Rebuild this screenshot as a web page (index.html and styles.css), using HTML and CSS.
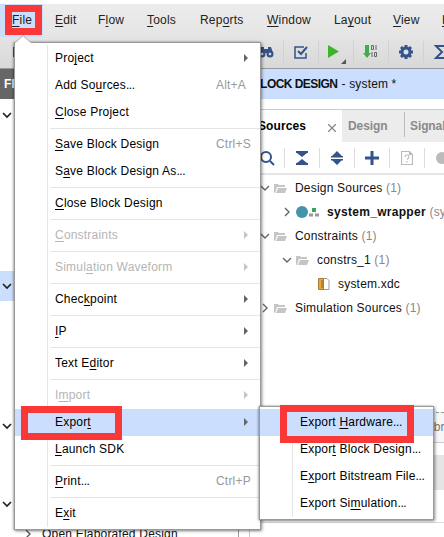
FILE: index.html
```html
<!DOCTYPE html>
<html lang="en">
<head>
<meta charset="utf-8">
<title>Block Design</title>
<link rel="stylesheet" href="styles.css">
</head>
<body>
<div class="app">
  <nav class="menubar">
    <span class="mb active"><u>F</u>ile</span><span class="mb"><u>E</u>dit</span><span class="mb">F<u>l</u>ow</span><span class="mb"><u>T</u>ools</span><span class="mb">Rep<u>o</u>rts</span><span class="mb"><u>W</u>indow</span><span class="mb">La<u>y</u>out</span><span class="mb"><u>V</u>iew</span><span class="mb"><u>H</u>elp</span>
  </nav>
  <div class="toolbar">
    <span class="tool first"><i class="save"></i></span>
    <span class="tool"><svg width="16" height="16" viewBox="0 0 16 16" fill="#34538b"><path d="M3 3h3v2h4V3h3l2 6H1z"/><circle cx="4" cy="10" r="3.5"/><circle cx="12" cy="10" r="3.5"/><circle cx="4" cy="10" r="1.3" fill="#dedede"/><circle cx="12" cy="10" r="1.3" fill="#dedede"/></svg></span>
    <span class="tool"><svg width="16" height="16" viewBox="0 0 16 16" fill="none" stroke="#34538b"><path d="M11 3H2v11h11V9" stroke-width="1.5"/><path d="M5 7l3 3 6-7" stroke-width="2"/></svg></span>
    <span class="tool"><svg width="20" height="24" viewBox="0 0 20 24"><path d="M2 5l11 6.500L2 18z" fill="#3eb527"/><path d="M20 19v5h-5z" fill="#555"/></svg></span>
    <span class="tool"><svg width="16" height="16" viewBox="0 0 16 16"><path d="M2 1h4v8h2l-4 5-4-5h2z" fill="#3fae49"/><path d="M8.500 1.500h2v4h-2zM13 1v5M9 8v5M11.500 8.500h2v4h-2z" fill="none" stroke="#666"/></svg></span>
    <span class="tool"><svg width="16" height="16" viewBox="0 0 16 16" fill="none" stroke="#34538b"><circle cx="8" cy="8" r="4" stroke-width="3"/><path d="M8 1v2M8 13v2M1 8h2M13 8h2M3 3l2 2M11 11l2 2M13 3l-2 2M3 13l2-2" stroke-width="3"/></svg></span>
    <span class="tool"><svg width="16" height="16" viewBox="0 0 16 16" fill="none" stroke="#34538b" stroke-width="2"><path d="M14 5V2H3l6 6-6 6h11v-3"/></svg></span>
  </div>
  <div class="workspace">
    <aside class="navigator">
      <div class="nav-title">Flow Navigator</div>
      <div class="nav-row r1"><svg class="chev" viewBox="0 0 10 8"><path d="M1 2l4 4 4-4"/></svg></div>
      <div class="nav-row r2"><svg class="chev" viewBox="0 0 10 8"><path d="M1 2l4 4 4-4"/></svg></div>
      <div class="nav-row r3"><svg class="chev" viewBox="0 0 10 8"><path d="M1 2l4 4 4-4"/></svg></div>
      <div class="nav-row r4"><svg class="chev" viewBox="0 0 10 8"><path d="M1 2l4 4 4-4"/></svg></div>
      <div class="nav-row r5"><svg width="8" height="10" viewBox="0 0 8 10" fill="none" stroke="#555" stroke-width="1.3"><path d="M2 1l4 4-4 4"/></svg><span>Open Elaborated Design</span></div>
    </aside>
    <main class="design">
      <header class="banner"><b>BLOCK DESIGN</b> - system *</header>
      <div class="tabs"><b class="tab current">Sources<svg width="8" height="8" viewBox="0 0 8 8" stroke="#888" stroke-width="1.3"><path d="M0 0l8 8M8 0L0 8"/></svg></b><b class="tab">Design</b><b class="tab signals">Signals</b></div>
      <div class="panel-tools">
        <span><svg width="16" height="16" viewBox="0 0 16 16" fill="none" stroke="#34538b" stroke-width="2"><circle cx="7" cy="7" r="5"/><path d="M11 11l4 4"/></svg></span>
        <span><svg width="12" height="16" viewBox="0 0 12 16" fill="#34538b"><path d="M0 1h12v2H0zM1 3h10L6 7zM6 9l5 4H1zM0 13h12v2H0z"/></svg></span>
        <span><svg width="12" height="16" viewBox="0 0 12 16" fill="#34538b"><path d="M6 1l5 5H1zM0 6h12v1.500H0zM0 9h12v1.500H0zM1 10h10l-5 5z"/></svg></span>
        <span><svg width="14" height="14" viewBox="0 0 14 14" fill="#34538b"><path d="M5.500 0h3v5.500H14v3H8.500V14h-3V8.500H0v-3h5.500z"/></svg></span>
        <span><svg width="12" height="14" viewBox="0 0 12 14" fill="none" stroke="#bbb"><path d="M.5.500h8l3 3v10H.5zM8.500.500v3h3M4 6q0-2 2-2t2 1.500-2 3M6 10v1.500" stroke-width="1.200"/></svg></span>
        <span><svg width="16" height="16" viewBox="0 0 16 16"><circle cx="8" cy="8" r="6" fill="#bbb"/></svg></span>
      </div>
      <div class="tree">
        <div class="node"><svg class="tw" viewBox="0 0 10 10"><path d="M1 3l4 4 4-4"/></svg><svg class="folder" viewBox="0 0 13 11"><path d="M0 1h4l1 1h6v2H3L1 10H0z"/><path d="M4 5h9l-2 5H2z"/></svg><span>Design Sources <em>(1)</em></span></div>
        <div class="node l1"><svg class="tw" viewBox="0 0 10 10"><path d="M3 1l4 4-4 4"/></svg><svg class="module" width="24" height="12" viewBox="0 0 24 12"><circle cx="6" cy="6" r="6" fill="#4594aa"/><path d="M16 2h4v4h-4z" fill="#34a853"/><path d="M13 7.500h4v3h-4zM19 7.500h4v3h-4z" fill="#999"/></svg><span><b>system_wrapper</b> <em>(system_wrapper.v)</em></span></div>
        <div class="node"><svg class="tw" viewBox="0 0 10 10"><path d="M1 3l4 4 4-4"/></svg><svg class="folder" viewBox="0 0 13 11"><path d="M0 1h4l1 1h6v2H3L1 10H0z"/><path d="M4 5h9l-2 5H2z"/></svg><span>Constraints <em>(1)</em></span></div>
        <div class="node l1"><svg class="tw" viewBox="0 0 10 10"><path d="M1 3l4 4 4-4"/></svg><svg class="folder" viewBox="0 0 13 11"><path d="M0 1h4l1 1h6v2H3L1 10H0z"/><path d="M4 5h9l-2 5H2z"/></svg><span>constrs_1 <em>(1)</em></span></div>
        <div class="node l2"><svg class="xdc" width="12" height="12" viewBox="0 0 12 12"><path d="M5 .5h4l2 2v9H5" fill="#fff" stroke="#999"/><path d="M.5.500h5v11h-5z" fill="#eda63c" stroke="#a87a3b"/><path d="M3 3h2M3 5h2M3 7h2M3 9h2" stroke="#8a6025"/></svg><span>system.xdc</span></div>
        <div class="node"><svg class="tw" viewBox="0 0 10 10"><path d="M3 1l4 4-4 4"/></svg><svg class="folder" viewBox="0 0 13 11"><path d="M0 1h4l1 1h6v2H3L1 10H0z"/><path d="M4 5h9l-2 5H2z"/></svg><span>Simulation Sources <em>(1)</em></span></div>
      </div>
      <div class="subtabs">Libraries</div>
      <div class="props"></div>
    </main>
  </div>
</div>

<div class="menu file-menu">
  <svg class="pointer" width="16" height="8" viewBox="0 0 16 8"><path d="M0 8l8-7.500L16 8z" fill="#fff"/><path d="M1 7L8 .5 15 7" fill="none" stroke="#aaa"/></svg>
  <div class="item sub"><span>Pro<u>j</u>ect</span></div>
  <div class="item"><span>Add So<u>u</u>rces<i>...</i></span><kbd>Alt+A</kbd></div>
  <div class="item"><span><u>C</u>lose Project</span></div>
  <hr>
  <div class="item"><span><u>S</u>ave Block Design</span><kbd>Ctrl+S</kbd></div>
  <div class="item"><span>S<u>a</u>ve Block Design As<i>...</i></span></div>
  <hr>
  <div class="item"><span><u>C</u>lose Block Design</span></div>
  <hr>
  <div class="item sub off"><span><u>C</u>onstraints</span></div>
  <hr>
  <div class="item sub off"><span>Simul<u>a</u>tion Waveform</span></div>
  <hr>
  <div class="item sub"><span>Chec<u>k</u>point</span></div>
  <hr>
  <div class="item sub"><span><u>I</u>P</span></div>
  <hr>
  <div class="item sub"><span>Text E<u>d</u>itor</span></div>
  <hr>
  <div class="item sub off"><span>I<u>m</u>port</span></div>
  <div class="item sub hot"><span>Expor<u>t</u></span></div>
  <div class="item"><span><u>L</u>aunch SDK</span></div>
  <hr>
  <div class="item"><span><u>P</u>rint<i>...</i></span><kbd>Ctrl+P</kbd></div>
  <hr>
  <div class="item"><span>E<u>x</u>it</span></div>
</div>
<div class="menu export-menu">
  <div class="item hot"><span>Export <u>H</u>ardware<i>...</i></span></div>
  <div class="item"><span>Expor<u>t</u> Block Design<i>...</i></span></div>
  <div class="item"><span>E<u>x</u>port Bitstream File<i>...</i></span></div>
  <div class="item"><span>Export Si<u>m</u>ulation<i>...</i></span></div>
</div>
<div class="mark mark-file"></div>
<div class="mark mark-export"></div>
<div class="mark mark-hardware"></div>
</body>
</html>
```
FILE: styles.css
```css
* { box-sizing: border-box; }
body { margin: 0; width: 444px; height: 537px; overflow: hidden; position: relative; background: #fff; font: 12px/14px "Liberation Sans", Arial, sans-serif; letter-spacing: .2px; color: #111; }
u { text-underline-offset: 2px; text-decoration-thickness: 1px; text-decoration-skip-ink: none; }
svg { flex: none; display: block; }
.app { width: 444px; height: 537px; padding-top: 4px; overflow: hidden; display: flex; flex-direction: column; }
.menubar { height: 33px; flex: none; display: flex; background: linear-gradient(#ececec, #e5e5e5); color: #222; white-space: nowrap; }
.mb { flex: none; padding-top: 9px; width: 49px; }
.mb:nth-child(1) { width: 43px; padding-left: 12px; margin-right: 12px; }
.mb:nth-child(2) { width: 43px; }
.mb:nth-child(5) { width: 67px; }
.mb:nth-child(6) { width: 67px; }
.mb:nth-child(7) { width: 59px; }
.mb:nth-child(4) { width: 53px; }
.mb.active { background: #cbdefe; }
.toolbar { height: 32px; flex: none; display: flex; background: linear-gradient(#e4e4e4, #d8d8d8); border-bottom: 1px solid #999; padding-top: 4px; }
.tool { width: 35px; height: 22px; flex: none; display: flex; align-items: center; justify-content: center; border-right: 1px solid #d1d1d1; }
.tool.first { width: 249px; justify-content: flex-start; padding-left: 13px; }
.save { width: 10px; height: 10px; background: #34538b; }
.workspace { flex: 1; display: flex; min-height: 0; }
.navigator { width: 239px; flex: none; border-right: 1px solid #999; display: flex; flex-direction: column; overflow: hidden; }
.nav-title { height: 30px; flex: none; background: #666; color: #fff; font-weight: bold; padding: 8px 4px; }
.nav-row { display: flex; height: 30px; flex: none; align-items: center; padding-left: 2px; }
.chev { width: 10px; height: 8px; fill: none; stroke: #222; stroke-width: 1.7; }
.r1 { margin-top: 1px; }
.r2 { margin-top: 141px; background: #cbdefe; }
.r3 { margin-top: 110px; }
.r4 { margin-top: 48px; }
.r5 { padding-left: 24px; gap: 10px; white-space: nowrap; }
.design { width: 195px; flex: none; margin-left: 10px; border-left: 1px solid #ccc; display: flex; flex-direction: column; }
.banner { height: 30px; flex: none; background: #cbdefe; padding: 8px 2px; white-space: nowrap; letter-spacing: .15px; }
.banner b { letter-spacing: -.55px; margin-right: .7px; }
.tabs { display: flex; flex: none; height: 33px; margin-top: 10px; border-top: 1px solid #ccc; background: #ececec; color: #8a8a8a; overflow: hidden; letter-spacing: -.1px; }
.tab { flex: none; width: 62px; padding: 9px 0 0 6px; }
.tab.current { width: 92px; background: #fff; color: #000; display: flex; padding: 9px 6px 0 8px; justify-content: space-between; letter-spacing: .1px; }
.tab.current svg { margin-top: 5px; }
.tab.signals { border-left: 1px solid #bbb; margin-top: 2px; padding: 7px 0 0 5px; height: 25px; }
.panel-tools { height: 33px; flex: none; display: flex; align-items: center; border-bottom: 2px solid #e5e5e5; overflow: hidden; }
.panel-tools span { width: 35px; height: 20px; flex: none; border-right: 1px solid #ddd; display: flex; align-items: center; justify-content: center; }
.tree { flex: none; padding-top: 1px; height: 236px; overflow: hidden; }
.node { display: flex; align-items: center; height: 24px; padding-left: 10px; white-space: nowrap; }
.node.l1 { padding-left: 32px; }
.node.l2 { padding-left: 68px; }
.node b { letter-spacing: .3px; }
.node em { font-style: normal; color: #888; }
.tw { width: 10px; height: 10px; fill: none; stroke: #666; stroke-width: 1.4; margin-right: 4px; }
.folder { width: 13px; height: 11px; fill: #c5c5c5; margin-right: 8px; }
.module { margin-right: 7px; }
.xdc { margin-right: 8px; }
.subtabs { height: 31px; flex: none; margin-top: 1px; border-top: 1px dashed #999; border-bottom: 1px solid #ccc; background: #f7f7f7; padding: 7px 0 0 174px; color: #777; overflow: hidden; }
.props { height: 68px; flex: none; margin-top: 12px; border-top: 35px solid #e5e5e5; border-bottom: 1px solid #ddd; }
.menu { position: absolute; background: #fff; border: 1px solid #999; box-shadow: 1px 1px 3px rgba(0,0,0,.45), -1px 0 2px rgba(0,0,0,.25); }
.file-menu { left: 14px; top: 42px; width: 247px; height: 488px; padding-top: 2px; background: linear-gradient(#e5e5e5, #e5e5e5) 32px 2px / 1px 482px no-repeat #fff; }
.export-menu { left: 259px; top: 406px; width: 175px; height: 114px; padding-top: 2px; background: linear-gradient(#e5e5e5, #e5e5e5) 32px 2px / 1px 108px no-repeat #fff; }
.pointer { position: absolute; left: 0; top: -8px; }
.item { height: 27px; padding: 6px 10px 0 40px; display: flex; white-space: nowrap; color: #000; }
.item.hot { background: #cbdefe; }
.item.off { color: #b5b5b5; }
.item span { width: 161px; flex: none; }
.item i { font-style: normal; letter-spacing: -.4px; }
.item kbd { font: inherit; color: #999; }
.sub::after { content: ""; margin: 3px 0 0 28px; border-left: 4px solid #666; border-top: 4px solid transparent; border-bottom: 4px solid transparent; height: 0; }
.sub.off::after { border-left-color: #c5c5c5; }
hr { height: 1px; margin: 2px 0 2px 35px; border: 0; background: #e5e5e5; }
.mark { position: absolute; border: 7px solid #fb3838; }
.mark-file { left: 5px; top: 5px; width: 37px; height: 30px; }
.mark-export { left: 21px; top: 406px; width: 101px; height: 34px; }
.mark-hardware { left: 280px; top: 405px; width: 134px; height: 38px; }
```
